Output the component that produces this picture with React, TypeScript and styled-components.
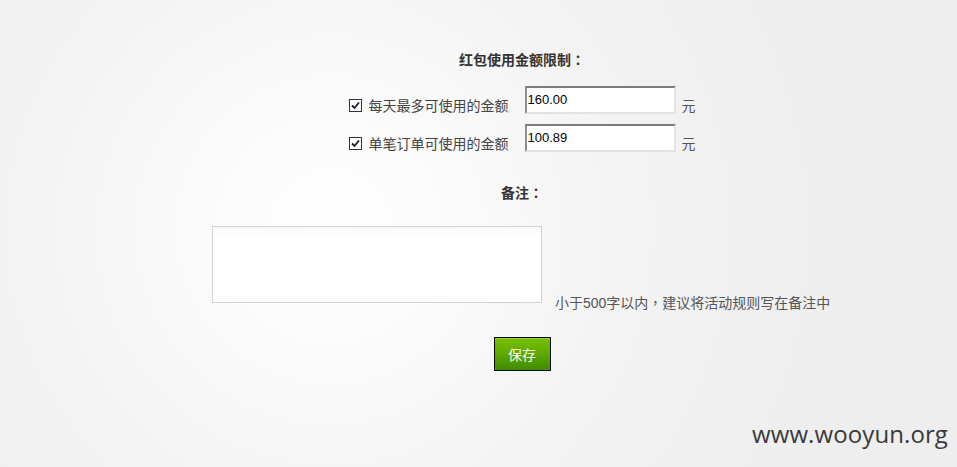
import React from "react";
import styled, { createGlobalStyle } from "styled-components";

const GlobalStyle = createGlobalStyle`
  html, body {
    margin: 0;
    padding: 0;
    width: 100%;
    height: 100%;
  }
  body {
    font-family: "Liberation Sans", "Noto Sans CJK SC", sans-serif;
    background: #efefef;
  }
`;

const Page = styled.div`
  position: relative;
  width: 957px;
  height: 467px;
  overflow: hidden;
  background: radial-gradient(
    circle at 330px 230px,
    #ffffff 0px,
    #fbfbfb 120px,
    #f3f3f3 300px,
    #eeeeee 520px
  );
`;

const Panel = styled.div`
  margin-left: 212px;
  width: 620px;
  padding-top: 49px;
  display: flex;
  flex-direction: column;
  align-items: center;
`;

const Heading = styled.div<{ $mt?: number }>`
  margin-top: ${(p) => p.$mt ?? 0}px;
  height: 20px;
  font-size: 14px;
  line-height: 20px;
  font-weight: bold;
  color: #333;
`;

/* centred full-width punctuation, as in the reference font */
const Punct = styled.span`
  font-family: "Noto Sans CJK TC", "Noto Sans CJK SC", sans-serif;
`;

const Rows = styled.div`
  margin-top: 17px;
  display: flex;
  flex-direction: column;
  gap: 10px;
`;

const Row = styled.div`
  display: flex;
  align-items: flex-end;
`;

const Check = styled.span`
  width: 13px;
  height: 13px;
  box-sizing: border-box;
  border: 1px solid #333;
  background: #fff;
  display: flex;
  align-items: center;
  justify-content: center;
  margin-bottom: 2px;
  margin-right: 7px;
`;

const Label = styled.span`
  font-size: 14px;
  line-height: 16px;
  color: #444;
  width: 140px;
  white-space: nowrap;
  margin-right: 16px;
`;

const Amount = styled.input`
  width: 151px;
  height: 28px;
  box-sizing: border-box;
  border-top: 2px solid #7c7c7c;
  border-left: 2px solid #8e8e8e;
  border-right: 2px solid #e2e2e2;
  border-bottom: 2px solid #e2e2e2;
  padding: 0 0 1px 1px;
  margin: 0;
  font-family: "Liberation Sans", sans-serif;
  font-size: 13px;
  color: #000;
  background: #fff;
  outline: none;
`;

const Unit = styled.span`
  margin-left: 6px;
  font-size: 14px;
  line-height: 16px;
  color: #555;
`;

const NoteRow = styled.div`
  margin-top: 24px;
  align-self: flex-start;
  display: flex;
  align-items: flex-end;
  gap: 13px;
`;

const NoteArea = styled.textarea`
  width: 330px;
  height: 77px;
  box-sizing: border-box;
  margin: 0;
  padding: 4px;
  border: 1px solid #d3d3d3;
  background: #fff;
  box-shadow: inset 0 10px 10px -8px rgba(0, 0, 0, 0.05);
  resize: none;
  outline: none;
  font-family: "Liberation Sans", "Noto Sans CJK SC", sans-serif;
`;

const Hint = styled.span`
  height: 16px;
  font-size: 14px;
  line-height: 16px;
  color: #555;
  white-space: nowrap;
  margin-bottom: -7px;
`;

const SaveButton = styled.button`
  margin-top: 34px;
  width: 57px;
  height: 34px;
  box-sizing: border-box;
  border: 1px solid #0a0a0a;
  background: linear-gradient(to bottom, #78c200 0%, #5ea800 50%, #3f8c00 100%);
  box-shadow: inset 0 1px 0 rgba(255, 255, 255, 0.25);
  color: #f4ffe8;
  font-family: "Liberation Sans", "Noto Sans CJK SC", sans-serif;
  font-size: 14px;
  padding: 0;
  cursor: pointer;
`;

const Watermark = styled.div`
  position: absolute;
  right: 9px;
  top: 418px;
  font-family: "Open Sans", sans-serif;
  font-size: 24px;
  line-height: 32px;
  color: #3a3a3a;
  letter-spacing: 0.1px;
`;

const CheckMark = () => (
  <svg width="9" height="9" viewBox="0 0 9 9">
    <path d="M1 4.5 L3.5 7 L8 1.5" fill="none" stroke="#1a1a2e" strokeWidth="1.8" />
  </svg>
);

const limits = [
  { label: "每天最多可使用的金额", value: "160.00" },
  { label: "单笔订单可使用的金额", value: "100.89" },
];

export default function App() {
  return (
    <Page>
      <GlobalStyle />
      <Panel>
        <Heading>
          红包使用金额限制<Punct>：</Punct>
        </Heading>
        <Rows>
          {limits.map((l) => (
            <Row key={l.label}>
              <Check>
                <CheckMark />
              </Check>
              <Label>{l.label}</Label>
              <Amount defaultValue={l.value} />
              <Unit>元</Unit>
            </Row>
          ))}
        </Rows>
        <Heading $mt={30}>
          备注<Punct>：</Punct>
        </Heading>
        <NoteRow>
          <NoteArea />
          <Hint>
            小于500字以内<Punct>，</Punct>建议将活动规则写在备注中
          </Hint>
        </NoteRow>
        <SaveButton>保存</SaveButton>
      </Panel>
      <Watermark>www.wooyun.org</Watermark>
    </Page>
  );
}
